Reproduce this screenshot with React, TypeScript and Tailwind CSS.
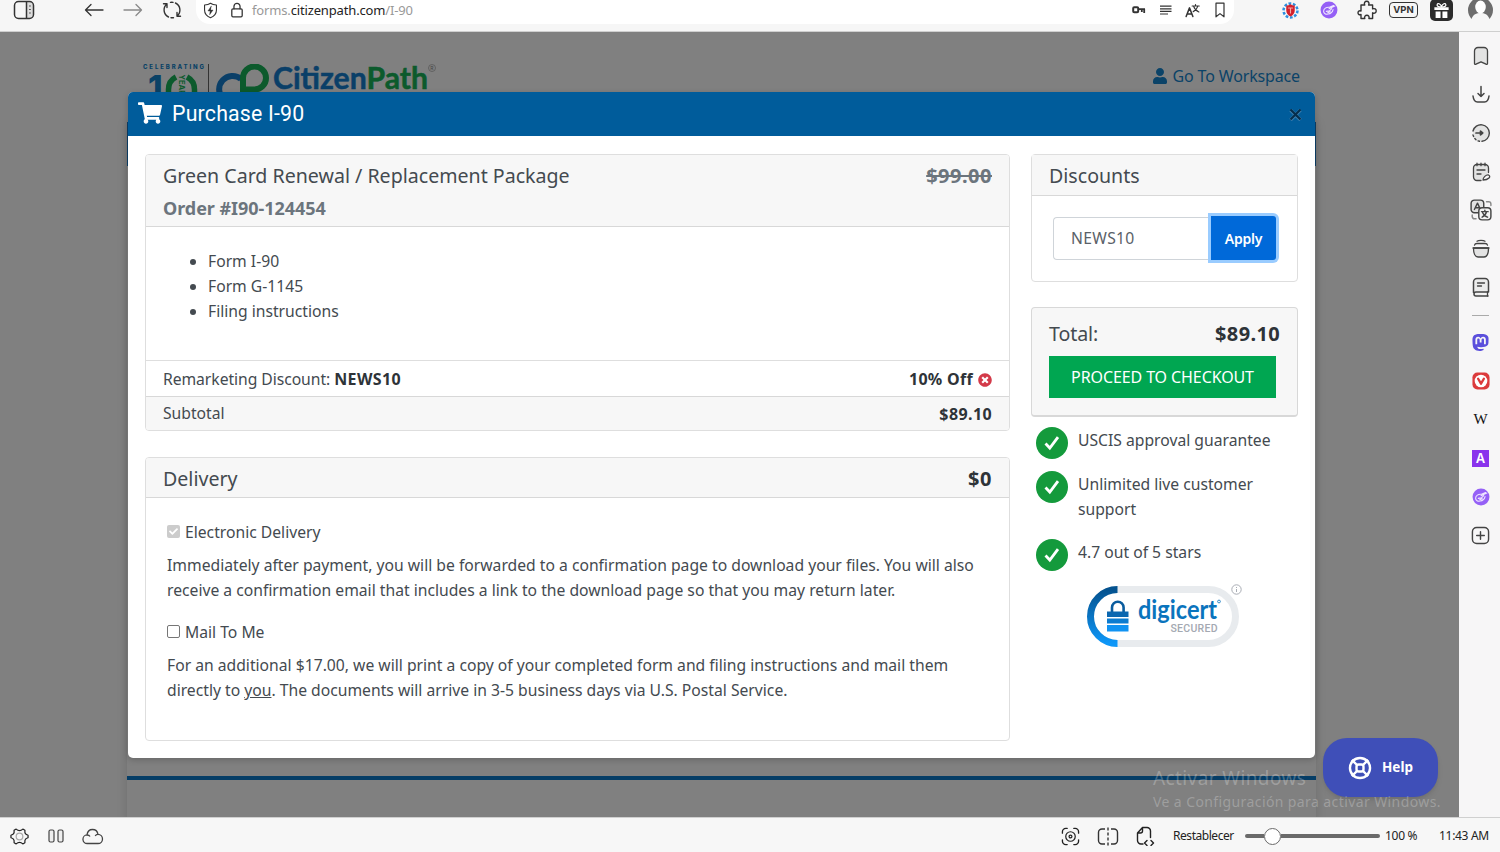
import type { ReactNode } from 'react';
import { FaCheck, FaShoppingCart, FaTimesCircle, FaUser } from 'react-icons/fa';
import { SiMastodon } from 'react-icons/si';

function Icon({ size = 20, children }: { size?: number; children: ReactNode }) {
  return (
    <svg
      width={size}
      height={size}
      viewBox="0 0 20 20"
      fill="none"
      stroke="currentColor"
      strokeWidth="1.3"
      strokeLinecap="round"
      strokeLinejoin="round"
      className="shrink-0"
    >
      {children}
    </svg>
  );
}

function PurpleBadge() {
  return (
    <Icon size={18}>
      <circle cx="10" cy="10" r="9.4" fill="#9560f6" stroke="none" />
      <path d="M10.500 7C7 6.500 4 8.500 4 11.500c0 2.500 2.500 3.500 5 3 3.500-.5 5-2.500 5.500-5M10 8.500l6.500-3M10.500 7l4.500-2M7 11.500l3.500-.5 2.500-2.500M8.500 13l3-1" stroke="#efe6ff" strokeWidth="1.200" />
    </Icon>
  );
}

function Toolbar() {
  return (
    <header className="flex h-8 shrink-0 border-b border-[#cfcfcf] bg-[#f6f6f6] text-[#333]">
      <div className="flex h-5 w-[196px] shrink-0 items-center">
        <div className="flex w-[47px] justify-center">
          <svg width="22" height="20" viewBox="0 0 22 20" fill="none" stroke="currentColor" strokeWidth="1.5">
            <path d="M14 2h3a3.500 3.500 0 0 1 3.500 3.500v9A3.500 3.500 0 0 1 17 18h-3z" fill="#ddd" stroke="none" />
            <rect x="1.500" y="1.500" width="19" height="17" rx="4" />
            <path d="M13.500 2v16" />
            <path d="M16.200 6h1.500M16.200 9.500h1.500M16.200 13h1.500" strokeWidth="1.200" />
          </svg>
        </div>
        <div className="ml-7 flex w-[38px] justify-center">
          <Icon>
            <path d="M19 10H1.500M7 4.500L1.500 10 7 15.500" />
          </Icon>
        </div>
        <div className="flex w-[39px] justify-center text-[#8a8a8a]">
          <Icon>
            <path d="M1 10h17.500M13 4.500l5.500 5.500-5.500 5.500" />
          </Icon>
        </div>
        <div className="flex w-[39px] justify-center">
          <Icon>
            <path d="M13.500 3A7.700 7.700 0 0 1 15 16M15 12.500V16.300h3.500M6.500 17A7.700 7.700 0 0 1 5 4M5 7.500V3.700H1.500M8.500 2.400a8 8 0 0 1 2.500 0M9 17.700a8 8 0 0 0 2.500 0" strokeWidth="1.400" />
          </Icon>
        </div>
      </div>
      <div className="flex h-6 w-[1038px] shrink-0 rounded-b-[14px] bg-white">
        <div className="flex h-5 w-full items-center">
          <div className="flex w-7 justify-center">
            <Icon size={17}>
              <path d="M10 1.500c2 1.500 4.500 2 7 2v6c0 4.500-3 7.500-7 9-4-1.500-7-4.500-7-9v-6c2.500 0 5-.5 7-2z" />
              <path d="M10.800 5L7 10.500h2.600L9 15l4-5.500h-2.700z" fill="currentColor" strokeWidth=".5" />
            </Icon>
          </div>
          <div className="flex w-[26px] justify-center">
            <Icon size={16}>
              <rect x="3.500" y="8.500" width="13" height="10" rx="1.500" strokeWidth="1.600" />
              <path d="M6.200 8.500V5.500a3.800 3.800 0 0 1 7.600 0v3" strokeWidth="1.600" />
            </Icon>
          </div>
          <p className="ml-[2px] pt-px font-['Noto_Sans'] text-[13px] tracking-[-0.15px] whitespace-nowrap text-[#999]">
            forms.<span className="text-[#222]">citizenpath.com</span>/I-90
          </p>
          <div className="mr-px ml-auto flex items-center">
            <div className="flex w-[27px] justify-center">
              <svg width="14" height="8" viewBox="0 0 14 8" fill="none" stroke="currentColor" strokeWidth="1.800">
                <rect x="1.200" y="1.200" width="5" height="5" rx="1" strokeWidth="2" />
                <path d="M6.500 3.200H13M12.200 3v4M9.800 3v3" />
              </svg>
            </div>
            <div className="flex w-[27px] justify-center">
              <svg width="12" height="10" viewBox="0 0 12 10" stroke="currentColor" strokeWidth="1.200">
                <path d="M0 1.200h11.500M0 3.800h11.500M0 6.400h11.500M0 9h8" />
              </svg>
            </div>
            <div className="flex w-[27px] justify-center">
              <Icon size={15}>
                <path d="M1.500 18L6 6.500 10.500 18M3 14.500h6" strokeWidth="2" />
                <path d="M9.500 4H19M14 2v2M17 4.500c-1 3.500-3 5.500-6 7M11.500 4.500c1 3 3.500 6 7 7.500" strokeWidth="1.500" />
              </Icon>
            </div>
            <div className="flex w-[27px] justify-center">
              <Icon size={16}>
                <path d="M5 1.500h10v17l-5-4-5 4z" strokeWidth="1.500" />
              </Icon>
            </div>
          </div>
        </div>
      </div>
      <div className="ml-[37px] flex h-5 items-center">
        <div className="flex w-[38px] justify-center">
          <Icon size={17}>
            <circle cx="10" cy="10" r="8.200" stroke="#2d8fe0" strokeWidth="3" strokeDasharray="3.200 1.950" strokeLinecap="butt" />
            <path d="M5 4c2 0 3.500-.500 5-1.500C11.500 3.500 13 4 15 4v6c0 3.500-2 5.500-5 7-3-1.500-5-3.500-5-7z" fill="#d3202c" stroke="none" />
            <path d="M7.500 7h5M10 7v6" stroke="#f3a6a6" />
          </Icon>
        </div>
        <div className="flex w-[39px] justify-center">
          <PurpleBadge />
        </div>
        <div className="flex w-[38px] justify-center">
          <Icon>
            <path d="M4 5h3.800C6.600 2.800 8 1.200 9.700 1.200s3 1.600 1.900 3.800h4v3.900c2-.9 3.600.3 3.600 2s-1.600 2.900-3.600 1.900V18.500h-3.700c.7-2-.5-3.200-2-3.200s-2.900 1.200-2.100 3.200H4v-4.100c-2 .9-3-.5-3-1.700 0-1.300 1.100-2.400 3-1.700z" strokeWidth="1.400" />
          </Icon>
        </div>
        <div className="flex w-[35px] justify-center">
          <span className="flex h-4 w-[29px] shrink-0 items-center justify-center rounded-[4px] border-[1.5px] border-[#333] font-['Inter'] text-[9.500px] font-bold">VPN</span>
        </div>
        <div className="flex w-[41px] justify-center">
          <span className="flex h-[22px] w-[23px] items-center justify-center rounded-[5px] bg-[#2c2c2c] text-white">
            <Icon size={19}>
              <path d="M2.500 6.500h15v3h-15zM3.800 11h5.200v7H3.800zM11 11h5.200v7H11z" fill="currentColor" stroke="none" />
              <path d="M10 6.500C6 6.500 5 5 5.500 3.500S9 2.500 10 6C11 2.500 14 2 14.500 3.500S14 6.500 10 6.500z" />
            </Icon>
          </span>
        </div>
        <div className="flex w-[36px] justify-center">
          <svg width="25" height="22" viewBox="0 0 25 22" className="shrink-0">
            <path d="M0 11a12.500 12.500 0 0 1 25 0c0 4-1.500 6.500-3.500 9C20 15.500 16.500 14 12.500 14S5 15.500 3.500 20C1.500 17.500 0 15 0 11z" fill="#6d6d6d" />
            <ellipse cx="12.500" cy="8" rx="5.300" ry="6.500" fill="#fff" />
          </svg>
        </div>
      </div>
    </header>
  );
}

const panelIcons: ReactNode[] = [
  <Icon>
    <path d="M7 1.500h6a3.500 3.500 0 0 1 3.500 3.500v12.500c0 .8-.8 1.200-1.500.7L10 15.800l-5 2.400c-.7.500-1.500 0-1.500-.7V5A3.500 3.500 0 0 1 7 1.500z" fill="#e3e3e3" />
  </Icon>,
  <Icon>
    <path d="M10 1.500v10M7 8.500l3 3 3-3M2 11c.5 4 2 6 4.500 6h7c2.500 0 4-2 4.500-6" strokeWidth="1.500" />
  </Icon>,
  <Icon>
    <circle cx="10" cy="10" r="8" fill="#e3e3e3" stroke="none" />
    <path d="M2 8a8.300 8.300 0 1 1 9 10.300M8.500 18.300L7 17.900M5 16.700l-1.200-1.200M2.600 13.500L2 12" strokeWidth="1.400" />
    <path d="M5 10h6M9.500 8.200l2.200 1.800-2.200 1.800z" strokeWidth="1.700" />
  </Icon>,
  <Icon>
    <path d="M10 18.500H6A3.500 3.500 0 0 1 2.500 15V6A3.500 3.500 0 0 1 6 2.500h8A3.500 3.500 0 0 1 17.500 6v4.500" fill="#e3e3e3" />
    <path d="M6 1.200v2.500M10 1.200v2.500M14 1.200v2.500M6 8h8M6 12h4M12 18c0-2.500 3-5.500 5.500-5 1.500.5 1.500 2 .5 3s-3 2-6 2z" />
  </Icon>,
  <Icon size={22}>
    <rect x="1" y="1" width="11.500" height="11.500" rx="3" fill="#e3e3e3" />
    <path d="M4 9.500L6.800 3.800l2.700 5.700M5 8h3.500" />
    <rect x="8" y="8" width="11" height="11" rx="3" fill="#f3f3f3" />
    <path d="M10.500 11.500h6M13.500 10.300v1.200M11 16.500c2-1 3.500-2.500 4-5M11.500 12.500c1 2 2.500 3.500 4.500 4" />
    <path d="M15 2.500h2a2 2 0 0 1 2 2V6M5.500 18H4a2 2 0 0 1-2-2v-1.500" stroke="#888" />
  </Icon>,
  <Icon>
    <path d="M2.500 9h15c0 5.500-1.500 9-4.500 9H7c-3 0-4.500-3.500-4.500-9z" fill="#e3e3e3" />
    <path d="M3.500 6.200C3.800 5 4.800 4.500 6 4.500h8c1.200 0 2.200.5 2.500 1.700M6 2.200C7 1.500 8 1.400 10 1.400s3 .1 4 .8M2 9h16" />
  </Icon>,
  <Icon>
    <path d="M2.500 15.500V5A3.500 3.500 0 0 1 6 1.500h8A3.500 3.500 0 0 1 17.500 5v10H5a2 2 0 0 0 0 4h12" fill="#ececec" strokeWidth="1.500" />
    <path d="M6.500 6h7M6.500 9h4M16.500 15v4" />
  </Icon>,
];

const webPanels: ReactNode[] = [
  <SiMastodon size={17} color="#5b4fdc" />,
  <Icon size={18}>
    <rect x=".5" y=".5" width="19" height="19" rx="5.500" fill="#dc3a3c" stroke="none" />
    <circle cx="10" cy="10" r="7" fill="#fff" stroke="none" />
    <path d="M6.800 7.500L10 13l3.200-5.500" stroke="#dc3a3c" strokeWidth="2.600" />
  </Icon>,
  <span className="font-['Liberation_Serif'] text-[15px] leading-none tracking-tight text-[#111]">W</span>,
  <span className="flex size-[17px] items-center justify-center bg-[#8a33ec] font-['Inter'] text-[13px] font-semibold text-white">A</span>,
  <PurpleBadge />,
  <Icon size={19}>
    <rect x="1.500" y="1.500" width="17" height="17" rx="4.500" strokeWidth="1.500" />
    <path d="M10 6v8M6 10h8" strokeWidth="1.500" />
  </Icon>,
];

function SidePanel() {
  return (
    <aside className="flex w-[41px] shrink-0 flex-col items-center bg-[#f7f6f7] pt-[5px] pl-[2px] text-[#444]">
      {panelIcons.map((icon, i) => (
        <div key={i} className="flex h-[38.500px] shrink-0 items-center">{icon}</div>
      ))}
      <div className="flex h-[17px] shrink-0 items-center">
        <span className="h-px w-[17px] bg-[#aaa]" />
      </div>
      {webPanels.map((icon, i) => (
        <div key={i} className="flex h-[38.500px] shrink-0 items-center">{icon}</div>
      ))}
    </aside>
  );
}

function Logo() {
  return (
    <svg width="300" height="46" viewBox="0 0 300 46" fill="none">
      <text x="1" y="5" fontFamily="Inter" fontSize="6" fontWeight="800" textLength="61" fill="#0a4266">CELEBRATING</text>
      <text x="6" y="35" fontFamily="Inter" fontSize="33" fontWeight="800" fill="#0a4266">1</text>
      <path d="M34 13a14 14 0 0 0-7.500 12.500V40M45 13a14 14 0 0 1 7.500 12.500V40" stroke="#0c5a2c" strokeWidth="5.500" />
      <text x="0" y="0" fontFamily="Inter" fontSize="7.500" fontWeight="700" fill="#0c5a2c" transform="translate(36.800 10.500) rotate(90)">YEARS</text>
      <path d="M66.500 0v46" stroke="#333" />
      <path d="M99 14.800A13.500 13.500 0 1 0 99 36" stroke="#0a3f68" strokeWidth="6" />
      <path d="M101 44V14a11.500 11.500 0 1 1 11.500 11.500H101" stroke="#0c5a2c" strokeWidth="6" />
      <text x="131" y="24.500" fontFamily="Lato" fontSize="29.500" fontWeight="700" textLength="155" lengthAdjust="spacingAndGlyphs" fill="#0a3f68" stroke="#0a3f68" strokeWidth=".5">
        Citizen<tspan fill="#0c5a2c" stroke="#0c5a2c">Path</tspan>
      </text>
      <circle cx="290" cy="4" r="3.500" stroke="#555" strokeWidth=".7" />
      <text x="288.300" y="6" fontFamily="Inter" fontSize="5" fill="#444">R</text>
    </svg>
  );
}

function SitePage() {
  return (
    <div className="h-full bg-[#808080] pt-8 pr-[16px]">
      <div className="mx-auto flex h-[58px] w-[1189px] items-start justify-between pr-[16px] pl-[15px]">
        <Logo />
        <div className="flex items-center gap-[5px] text-[#0b4368]">
          <FaUser size={16} />
          <span className="font-['Noto_Sans'] text-[16px] leading-[24px] tracking-[-0.15px] whitespace-nowrap">Go To Workspace</span>
        </div>
      </div>
      <div className="mx-auto h-[700px] w-[1189px] shadow-[0_0_10px_rgba(0,0,0,0.150)]">
        <div className="h-[44px] bg-[#0b3f68]" />
        <div className="h-[610px]" />
        <div className="h-1 bg-[#053d66]" />
      </div>
    </div>
  );
}

function OrderCard() {
  return (
    <section className="h-[277px] overflow-hidden rounded-[4px] border border-[#dedede]">
      <div className="h-[72px] border-b border-[#d8d8d8] bg-[#f7f7f7] px-[17px] pt-[6px]">
        <div className="flex justify-between text-[19.600px] leading-[30px]">
          <h2>Green Card Renewal / Replacement Package</h2>
          <span className="text-[20px] font-bold tracking-[0.5px] text-[#6c757d] line-through">$99.00</span>
        </div>
        <p className="mt-[2px] text-[18px] leading-[30px] font-bold tracking-[-0.05px] text-[#6c757d]">Order #I90-124454</p>
      </div>
      <ul className="h-[134px] list-disc border-b border-[#dedede] pt-[22px] pl-[62px] leading-[25px]">
        <li>Form I-90</li>
        <li>Form G-1145</li>
        <li>Filing instructions</li>
      </ul>
      <div className="flex h-[35px] items-center justify-between px-[17px] pt-px">
        <p className="tracking-[-0.05px]">
          Remarketing Discount: <strong className="text-[16px] tracking-[0.4px] text-[#2e3338]">NEWS10</strong>
        </p>
        <p className="flex items-center gap-[5px] text-[16px] font-bold tracking-[0.3px] text-[#2e3338]">
          10% Off <FaTimesCircle size={14} color="#d33a49" className="mt-[2px]" />
        </p>
      </div>
      <div className="flex h-[34px] items-center justify-between border-t border-[#d8d8d8] bg-[#f7f7f7] px-[17px]">
        <span>Subtotal</span>
        <strong className="text-[16px] tracking-[0.4px] text-[#2e3338]">$89.10</strong>
      </div>
    </section>
  );
}

function DeliveryCard() {
  return (
    <section className="mt-[26px] h-[284px] overflow-hidden rounded-[4px] border border-[#dedede]">
      <div className="flex h-[40px] items-center justify-between border-b border-[#d8d8d8] bg-[#f7f7f7] px-[17px] pt-[2px] text-[19.600px] leading-[30px]">
        <h2>Delivery</h2>
        <strong className="text-[20px] tracking-[0.5px] text-[#2e3338]">$0</strong>
      </div>
      <div className="px-[21px] pt-[22px] leading-[25px]">
        <div className="flex items-center gap-[5px]">
          <span className="mb-[2px] flex size-[13px] items-center justify-center rounded-[2px] bg-[#ccc] text-white">
            <FaCheck size={9} />
          </span>
          Electronic Delivery
        </div>
        <p className="mt-[8px] whitespace-nowrap">
          Immediately after payment, you will be forwarded to a confirmation page to download your files. You will also
          <br />
          receive a confirmation email that includes a link to the download page so that you may return later.
        </p>
        <div className="mt-[17px] flex items-center gap-[5px]">
          <span className="mb-[2px] size-[13px] rounded-[2px] border border-[#767676]" />
          Mail To Me
        </div>
        <p className="mt-[8px] whitespace-nowrap">
          For an additional $17.00, we will print a copy of your completed form and filing instructions and mail them
          <br />
          directly to <u>you</u>. The documents will arrive in 3-5 business days via U.S. Postal Service.
        </p>
      </div>
    </section>
  );
}

function Perk({ children }: { children: ReactNode }) {
  return (
    <li className="flex items-start gap-[10px]">
      <span className="mt-[2px] flex size-8 shrink-0 items-center justify-center rounded-full bg-[#149a3c]">
        <svg width="18" height="18" viewBox="0 0 18 18" fill="none" stroke="#fff" strokeWidth="2.800">
          <path d="M2.500 9.500l4.300 4.500L15 3.200" />
        </svg>
      </span>
      <span className="pt-[3px] pb-[5px] leading-[25px]">{children}</span>
    </li>
  );
}

function DigicertSeal() {
  return (
    <svg width="157" height="64" viewBox="0 0 157 64" fill="none" className="ml-[55px]">
      <defs>
        <linearGradient id="seal" x1="0" y1="0" x2="0" y2="1">
          <stop offset="0" stopColor="#04528f" />
          <stop offset="1" stopColor="#0e97f8" />
        </linearGradient>
      </defs>
      <rect x="4.500" y="5.500" width="145" height="54" rx="27" stroke="#e8ebee" strokeWidth="7" />
      <path d="M31.500 5.500a27 27 0 0 0 0 54" stroke="url(#seal)" strokeWidth="7" />
      <path d="M26 28v-4.500a5.800 5.800 0 0 1 11.600 0V28" stroke="#0a5c9e" strokeWidth="2.600" />
      <path d="M21 27.500h21.500v5.500H21z" fill="#0b67b0" />
      <path d="M21 34.500h21.500v5H21z" fill="#0d7cd0" />
      <path d="M21 41h21.500v6.500H21z" fill="#1193f2" />
      <text x="52" y="35" fontFamily="Lato" fontSize="27" fontWeight="700" textLength="79" lengthAdjust="spacingAndGlyphs" fill="#0a74bd">digicert</text>
      <circle cx="133" cy="17.500" r="1.400" stroke="#0a74bd" strokeWidth=".8" />
      <text x="84.500" y="48" fontFamily="Roboto" fontSize="10.500" fontWeight="500" textLength="47" fill="#a4a9b2">SECURED</text>
      <circle cx="150.500" cy="5.500" r="4.700" fill="#fff" stroke="#a9adb5" />
      <path d="M150.500 5v3M150.500 3v1" stroke="#a9adb5" />
    </svg>
  );
}

function Summary() {
  return (
    <div className="w-[267px] shrink-0">
      <section className="h-[128px] rounded-[4px] border border-[#dedede]">
        <h2 className="flex h-[41px] items-center border-b border-[#d8d8d8] bg-[#f7f7f7] px-[17px] pt-[2px] text-[19.600px] leading-[30px]">
          Discounts
        </h2>
        <div className="flex pt-[20px] pl-[21px]">
          <div className="mt-px flex h-[43px] w-[158px] items-center rounded-l-[4px] border border-r-0 border-[#cfd4d9] px-[17px] pt-px tracking-[0.3px] text-[#5a6168]">NEWS10</div>
          <button className="h-[44px] w-[65px] rounded-r-[3px] bg-[#0069d9] text-[14px] font-semibold tracking-[-0.2px] text-white ring-3 ring-[#9accff]">Apply</button>
        </div>
      </section>
      <section className="mt-[25px] h-[110px] rounded-[4px] border border-b-2 border-[#d8d8d8] bg-[#f7f7f7] pr-[17px] pl-[17px]">
        <div className="flex items-center justify-between pt-[11px] text-[19.600px] leading-[30px]">
          <span className="tracking-[-0.1px]">Total:</span>
          <strong className="text-[20px] tracking-[0.35px] text-[#2e3338]">$89.10</strong>
        </div>
        <button className="mt-[7px] h-[42px] w-[227px] bg-[#00a651] text-[16px] tracking-[-0.1px] whitespace-nowrap text-white">PROCEED TO CHECKOUT</button>
      </section>
      <ul className="mt-[8px] flex flex-col gap-[10px] pl-[5px]">
        <Perk>USCIS approval guarantee</Perk>
        <Perk>
          Unlimited live customer
          <br />
          support
        </Perk>
        <Perk>4.7 out of 5 stars</Perk>
      </ul>
      <div className="mt-[13px]">
        <DigicertSeal />
      </div>
    </div>
  );
}

function PurchaseDialog() {
  return (
    <div className="flex h-[666px] w-[1187px] flex-col overflow-hidden rounded-[5px] bg-white font-['Noto_Sans'] text-[15.700px] text-[#444a50] shadow-[0_2px_6px_rgba(0,0,0,0.200)]">
      <div className="flex h-[44px] shrink-0 items-center justify-between bg-[#005c9b] pr-[13px] pl-[10px]">
        <h1 className="flex items-center gap-[10px] font-['Roboto'] text-[21.300px] tracking-[0.200px] text-white">
          <FaShoppingCart size={24} className="mb-[2px]" />
          Purchase I-90
        </h1>
        <svg width="13" height="13" viewBox="0 0 13 13" stroke="#062e4d" strokeWidth="2.200">
          <path d="M1.500 2l10 10M11.500 2l-10 10" stroke="#3f80b0" strokeWidth="3.400" />
          <path d="M1.500 1.500l10 10M11.500 1.500l-10 10" />
        </svg>
      </div>
      <div className="flex justify-between pt-[18px] pr-[17px] pl-[17px]">
        <div className="w-[865px] shrink-0">
          <OrderCard />
          <DeliveryCard />
        </div>
        <Summary />
      </div>
    </div>
  );
}

function StatusBar() {
  return (
    <footer className="flex h-[35px] shrink-0 items-center border-t border-[#d0d0d0] bg-[#f7f7f7] pt-[2px] font-['Noto_Sans'] text-[12px] text-[#222]">
      <div className="flex w-[38px] justify-center">
        <Icon size={19}>
          <path d="M6.500 2.200C8 3.600 8.800 3.800 10 3.800s2-.2 3.500-1.600l2.200 1.300c-.3 2 0 3 .7 3.800.6.700 1.400 1 2.600 1.400v2.600c-1.200.4-2 .7-2.600 1.400-.7.800-1 1.800-.7 3.800l-2.200 1.300c-1.500-1.400-2.300-1.600-3.500-1.600s-2 .2-3.500 1.600l-2.200-1.300c.3-2 0-3-.7-3.800-.6-.7-1.400-1-2.600-1.400V8.700c1.200-.4 2-.7 2.600-1.400.7-.8 1-1.800.7-3.800z" />
          <circle cx="10" cy="10" r="3.500" stroke="#aaa" />
        </Icon>
      </div>
      <div className="flex w-[36px] justify-center">
        <svg width="16" height="14" viewBox="0 0 16 14" fill="#eee" stroke="#444" strokeWidth="1.200">
          <rect x="1" y="1" width="5" height="12" rx="1.500" />
          <rect x="10" y="1" width="5" height="12" rx="1.500" />
        </svg>
      </div>
      <div className="flex w-[37px] justify-center">
        <svg width="22" height="17" viewBox="0 0 22 17" fill="none" stroke="#444" strokeWidth="1.300">
          <path d="M5.500 15.500a4.300 4.300 0 0 1-.5-8.600c.5-3.500 3-5.400 5.500-5.400 3 0 5 2 5.500 4.800 2.500 0 4.500 2 4.500 4.600s-2 4.600-4.500 4.600zM5 7c1.500 0 2.500.5 3 1.500M16 6.300c-1.300 0-2.300.7-2.800 1.700" />
        </svg>
      </div>
      <div className="ml-auto flex items-center">
        <div className="flex w-[37px] justify-center">
          <Icon size={19}>
            <path d="M1.500 6.500V5A3.500 3.500 0 0 1 5 1.500h1.500M13.500 1.500H15A3.500 3.500 0 0 1 18.500 5v1.500M18.500 13.500V15a3.500 3.500 0 0 1-3.500 3.500h-1.500M6.500 18.500H5A3.500 3.500 0 0 1 1.500 15v-1.500" strokeWidth="1.400" />
            <circle cx="10" cy="10" r="5" />
            <circle cx="10" cy="10" r="1.500" />
          </Icon>
        </div>
        <div className="flex w-[37px] justify-center">
          <svg width="22" height="19" viewBox="0 0 22 19" fill="none" stroke="#333" strokeWidth="1.400">
            <path d="M8 2H5a3.500 3.500 0 0 0-3.500 3.500v8A3.500 3.500 0 0 0 5 17h3M14 2h3a3.500 3.500 0 0 1 3.500 3.500v8A3.500 3.500 0 0 1 17 17h-3" />
            <path d="M11 .5v18" strokeDasharray="3 2" />
          </svg>
        </div>
        <div className="flex w-[38px] justify-center">
          <Icon>
            <path d="M8 18H6a3.500 3.500 0 0 1-3.500-3.500V7L7.500 1.500H12A3.500 3.500 0 0 1 15.500 5v6.500M2.500 7h3a2 2 0 0 0 2-2V1.500M12 14.500l-2.500 2.500 2.500 2.500M16 14.500l2.500 2.500-2.500 2.500" strokeWidth="1.400" />
          </Icon>
        </div>
        <span className="ml-[9px] w-[61px] tracking-[-0.45px] whitespace-nowrap">Restablecer</span>
        <div className="ml-[11px] flex w-[135px] items-center">
          <span className="h-1 w-[19px] rounded-l-full bg-[#6a6a6a]" />
          <span className="size-[17px] rounded-full border-[1.5px] border-[#6a6a6a] bg-white" />
          <span className="h-1 flex-1 rounded-r-full bg-[#6a6a6a]" />
        </div>
        <span className="ml-[5px] w-[54px] tracking-[-0.3px] whitespace-nowrap">100 %</span>
        <span className="w-[61px] tracking-[-0.3px] whitespace-nowrap">11:43 AM</span>
      </div>
    </footer>
  );
}

export default function App() {
  return (
    <div className="flex h-[852px] w-[1500px] flex-col overflow-hidden">
      <Toolbar />
      <div className="flex min-h-0 flex-1">
        <main className="relative w-[1459px] shrink-0 overflow-hidden">
          <SitePage />
          <div className="absolute inset-0 flex justify-center pt-[60px] pr-[16px]">
            <PurchaseDialog />
          </div>
          {/* Help launcher */}
          <button className="absolute right-[21px] bottom-[20px] flex h-[59px] w-[115px] items-center justify-center gap-[10px] rounded-[24px] bg-[#3f4fb8] font-['Noto_Sans'] text-[13.500px] font-bold text-white shadow-md">
            <svg width="24" height="24" viewBox="0 0 22 22" fill="none" stroke="currentColor" strokeWidth="2.200">
              <circle cx="11" cy="11" r="9.200" />
              <rect x="7.800" y="7.800" width="6.400" height="6.400" rx="2" />
              <path d="M3.500 3.500l5 5M18.500 3.500l-5 5M3.500 18.500l5-5M18.500 18.500l-5-5" />
            </svg>
            Help
          </button>
          <div className="pointer-events-none absolute right-[19px] bottom-[4px] w-[287px] font-['Noto_Sans'] whitespace-nowrap text-white/25">
            <p className="text-[19px] leading-[26px] tracking-[0.4px]">Activar Windows</p>
            <p className="text-[14px] leading-[22px] tracking-[0.4px]">Ve a Configuración para activar Windows.</p>
          </div>
        </main>
        <SidePanel />
      </div>
      <StatusBar />
    </div>
  );
}
